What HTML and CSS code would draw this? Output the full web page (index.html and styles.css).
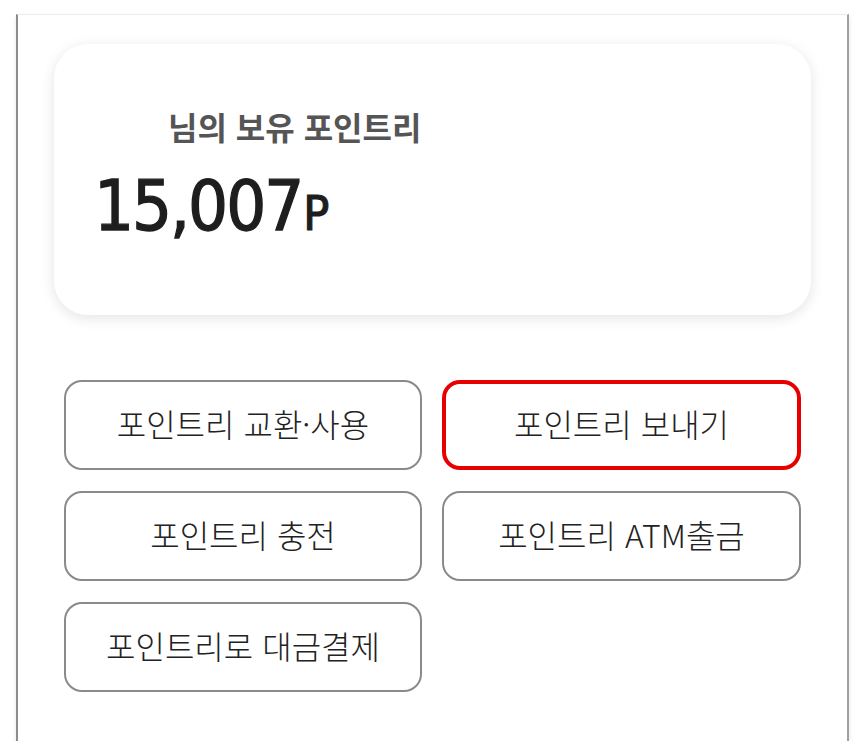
FILE: index.html
```html
<!DOCTYPE html>
<html lang="ko">
<head>
<meta charset="utf-8">
<link rel="stylesheet" href="styles.css">
</head>
<body>
<div class="frame">
  <section class="card">
    <p class="title">님의 보유 포인트리</p>
    <p class="amount"><span class="num">15,007</span><span class="unit">P</span></p>
  </section>
  <div class="actions">
    <button class="btn">포인트리 교환·사용</button>
    <button class="btn btn-active">포인트리 보내기</button>
    <button class="btn">포인트리 충전</button>
    <button class="btn">포인트리 ATM출금</button>
    <button class="btn">포인트리로 대금결제</button>
  </div>
</div>
</body>
</html>
```
FILE: styles.css
```css
html, body {
  margin: 0;
  padding: 0;
  background: #ffffff;
}
body {
  font-family: "Noto Sans CJK KR", "Noto Sans", sans-serif;
  padding-top: 14px;
}
.frame {
  box-sizing: border-box;
  margin-left: 16px;
  width: 833px;
  height: 727px;
  background: #fff;
  border-left: 2px solid #8c8c8c;
  border-right: 2px solid #a0a0a0;
  border-top: 1px solid #ececec;
  box-shadow: 0 3px 5px rgba(0,0,0,0.10);
  padding-top: 29px;
}
.card {
  box-sizing: border-box;
  margin-left: 36px;
  width: 757px;
  height: 271px;
  border-radius: 34px;
  background: #fff;
  box-shadow: 0 3px 14px rgba(0,0,0,0.11);
  padding: 62px 0 0 40px;
}
.title {
  margin: 0 0 0 74px;
  font-size: 32px;
  line-height: 40px;
  font-weight: 700;
  color: #555;
}
.amount {
  margin: 24px 0 0 0;
  line-height: 72px;
  color: #1e1e1e;
}
.num {
  font-family: "DejaVu Sans Condensed", "DejaVu Sans", sans-serif;
  font-size: 70px;
  letter-spacing: -2px;
  -webkit-text-stroke: 1.3px #1e1e1e;
}
.unit {
  font-family: "DejaVu Sans Condensed", "DejaVu Sans", sans-serif;
  font-size: 48px;
  margin-left: 1px;
  -webkit-text-stroke: 1.2px #1e1e1e;
}
.actions {
  display: grid;
  grid-template-columns: 358px 359px;
  grid-auto-rows: 90px;
  column-gap: 20px;
  row-gap: 21px;
  margin: 65px 0 0 46px;
}
.btn {
  box-sizing: border-box;
  font-family: "Noto Sans CJK KR", "Noto Sans", sans-serif;
  font-size: 32px;
  font-weight: 300;
  color: #222;
  background: #fff;
  border: 2px solid #8a8a8a;
  border-radius: 18px;
  padding: 0 0 4px 0;
  cursor: pointer;
}
.btn-active {
  border: 4px solid #e80000;
}
```
